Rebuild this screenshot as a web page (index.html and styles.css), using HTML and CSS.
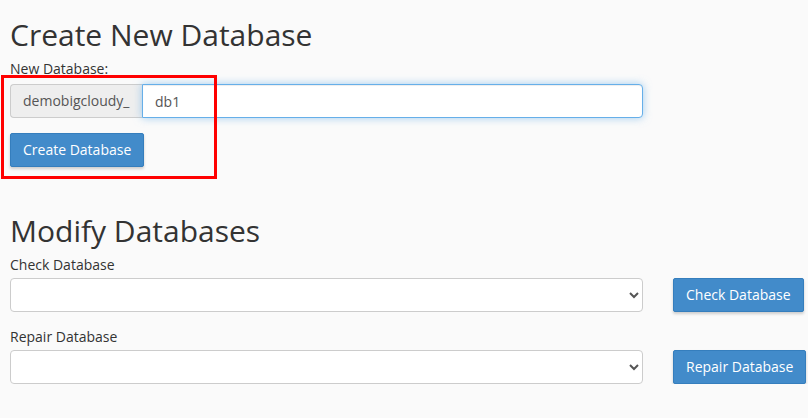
FILE: index.html
```html
<!DOCTYPE html>
<html>
<head>
<meta charset="utf-8">
<link rel="stylesheet" href="styles.css">
</head>
<body>
<div class="page">
  <section class="create">
    <h2 class="title">Create New Database</h2>
    <label class="label" for="db">New Database:</label>
    <div class="input-group">
      <span class="addon">demobigcloudy_</span>
      <input id="db" class="field focus" type="text" value="db1">
    </div>
    <button class="btn">Create Database</button>
    <div class="highlight"></div>
  </section>
  <section class="modify">
    <h2 class="title">Modify Databases</h2>
    <label class="label" for="check">Check Database</label>
    <div class="row">
      <select id="check" class="field select"><option></option></select>
      <button class="btn">Check Database</button>
    </div>
    <label class="label second" for="repair">Repair Database</label>
    <div class="row">
      <select id="repair" class="field select"><option></option></select>
      <button class="btn">Repair Database</button>
    </div>
  </section>
</div>
</body>
</html>
```
FILE: styles.css
```css
* { box-sizing: border-box; }
html, body { margin: 0; padding: 0; }
body {
  background: #fafafa;
  font-family: "Open Sans", "Liberation Sans", sans-serif;
  font-size: 14px;
  line-height: 20px;
  color: #333;
}
.page { padding: 18px 10px 0 10px; }
.create { position: relative; }
.title {
  margin: 0 0 8px 0;
  font-size: 30px;
  line-height: 33px;
  font-weight: 400;
  color: #333;
}
.label {
  display: block;
  font-weight: 400;
  margin-bottom: 5px;
  color: #333;
}
.input-group {
  display: flex;
  width: 633px;
  height: 34px;
}
.addon {
  display: flex;
  align-items: center;
  padding: 0 12px;
  background: #eee;
  border: 1px solid #ccc;
  border-right: 0;
  border-radius: 4px 0 0 4px;
  color: #555;
  width: 132px;
  flex-shrink: 0;
}
.field {
  height: 34px;
  border: 1px solid #ccc;
  background: #fff;
  font-family: inherit;
  font-size: 14px;
  color: #555;
  padding: 6px 12px;
  margin: 0;
}
.focus {
  flex: 1;
  min-width: 0;
  border-color: #66afe9;
  border-radius: 0 4px 4px 0;
  outline: 0;
  box-shadow: inset 0 1px 1px rgba(0,0,0,.075), 0 0 8px rgba(102,175,233,.6);
}
.btn {
  display: block;
  flex-shrink: 0;
  white-space: nowrap;
  height: 34px;
  padding: 6px 12px;
  font-family: inherit;
  font-size: 14px;
  line-height: 20px;
  color: #fff;
  background: #428bca;
  border: 1px solid #357ebd;
  border-radius: 2px;
  box-shadow: 0 2px 3px rgba(0,0,0,.18);
  cursor: pointer;
}
.create .btn { margin-top: 15px; }
.highlight {
  position: absolute;
  left: -9px;
  top: 57px;
  width: 216px;
  height: 104px;
  border: 3px solid #ff0000;
  pointer-events: none;
}
.modify { margin-top: 47px; }
.modify .title { margin-bottom: 8px; }
.modify .label { margin-bottom: 3px; }
.label.second { margin-top: 15px; }
.row {
  display: flex;
  align-items: center;
  gap: 30px;
}
.select {
  flex-shrink: 0;
  width: 633px;
  border-radius: 4px;
  padding: 6px 8px;
}
```
